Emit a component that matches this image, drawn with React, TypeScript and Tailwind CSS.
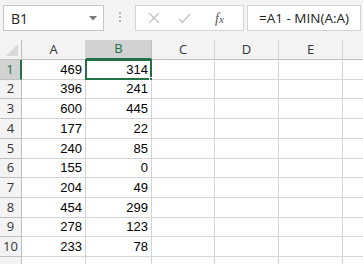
const rows: { n: number; a: number; b: number; h: string }[] = [
  { n: 1, a: 469, b: 314, h: "h-[20px]" },
  { n: 2, a: 396, b: 241, h: "h-[19px]" },
  { n: 3, a: 600, b: 445, h: "h-[20px]" },
  { n: 4, a: 177, b: 22, h: "h-[20px]" },
  { n: 5, a: 240, b: 85, h: "h-[20px]" },
  { n: 6, a: 155, b: 0, h: "h-[19px]" },
  { n: 7, a: 204, b: 49, h: "h-[20px]" },
  { n: 8, a: 454, b: 299, h: "h-[20px]" },
  { n: 9, a: 278, b: 123, h: "h-[19px]" },
  { n: 10, a: 233, b: 78, h: "h-[20px]" },
];

const cols = [
  { key: "A", w: "w-[64px]" },
  { key: "B", w: "w-[66px]" },
  { key: "C", w: "w-[63px]" },
  { key: "D", w: "w-[64px]" },
  { key: "E", w: "w-[64px]" },
  { key: "F", w: "w-[40px]" },
];

function FormulaBar() {
  return (
    <div className="flex h-[40px] items-start pl-[3px] pt-[5px]">
      <div className="flex h-[26px] w-[101px] items-center justify-between border border-[#c6c6c6] bg-white pl-[7px] pr-[6px]">
        <span className="text-[14px] text-[#222]">B1</span>
        <svg width="8" height="5" viewBox="0 0 8 5">
          <path d="M0 0H8L4 4.5Z" fill="#777" />
        </svg>
      </div>
      <div className="ml-[15px] mt-[7px] flex flex-col gap-[2px]">
        <span className="block h-[2px] w-[2px] bg-[#b4b4b4]" />
        <span className="block h-[2px] w-[2px] bg-[#b4b4b4]" />
        <span className="block h-[2px] w-[2px] bg-[#b4b4b4]" />
      </div>
      <div className="ml-[14px] flex h-[26px] w-[109px] items-center border border-[#d4d4d4] bg-white">
        <svg className="ml-[12px]" width="12" height="12" viewBox="0 0 12 12">
          <path d="M1 1L11 11M11 1L1 11" stroke="#c4c4c4" strokeWidth="1.4" />
        </svg>
        <svg className="ml-[18px]" width="13" height="11" viewBox="0 0 13 11">
          <path d="M1 6L4.5 9.5L12 1" stroke="#c4c4c4" strokeWidth="1.4" fill="none" />
        </svg>
        <span className="ml-[24px] font-['Liberation_Serif',serif] text-[14px] italic text-[#555]">
          f<span className="text-[11px]">x</span>
        </span>
      </div>
      <div className="ml-[3px] flex h-[26px] w-[114px] items-center border border-[#d4d4d4] bg-white pl-[11px]">
        <span className="text-[13.5px] text-[#222]">=A1 - MIN(A:A)</span>
      </div>
    </div>
  );
}

function HeaderRow() {
  return (
    <div className="flex h-[20px]">
      <div className="relative w-[22px] shrink-0 border-b border-r border-[#bfbfbf] bg-[#f3f3f3]">
        <svg className="absolute bottom-[3px] right-[3px]" width="12" height="12" viewBox="0 0 12 12">
          <path d="M12 0V12H0Z" fill="#d9d9d9" />
        </svg>
      </div>
      {cols.map((c) =>
        c.key === "B" ? (
          <div
            key={c.key}
            className={`${c.w} flex shrink-0 items-center justify-center border-b-2 border-r border-b-[#217346] border-r-[#bfbfbf] bg-[#d2d2d2] text-[13px] text-[#217346]`}
          >
            {c.key}
          </div>
        ) : (
          <div
            key={c.key}
            className={`${c.w} flex shrink-0 items-center justify-center border-b border-r border-[#d4d4d4] border-b-[#bfbfbf] bg-[#f3f3f3] text-[13px] text-[#333]`}
          >
            {c.key === "F" ? null : c.key}
          </div>
        )
      )}
    </div>
  );
}

export default function App() {
  return (
    <div className="h-[264px] w-[363px] overflow-hidden bg-[#f3f3f3] font-['Open_Sans',sans-serif]">
      <FormulaBar />
      <HeaderRow />
      {rows.map((r) => (
        <div key={r.n} className={`flex ${r.h}`}>
          {r.n === 1 ? (
            <div className="flex w-[22px] shrink-0 items-center justify-center border-b border-r-2 border-b-[#bfbfbf] border-r-[#217346] bg-[#d2d2d2] text-[13px] text-[#217346]">
              {r.n}
            </div>
          ) : (
            <div className="flex w-[22px] shrink-0 items-center justify-center border-b border-r border-[#bfbfbf] bg-[#f3f3f3] text-[13px] text-[#333]">
              {r.n}
            </div>
          )}
          {cols.map((c) => {
            const val = c.key === "A" ? r.a : c.key === "B" ? r.b : null;
            const sel = r.n === 1 && c.key === "B";
            return (
              <div
                key={c.key}
                className={`${c.w} relative flex shrink-0 items-center justify-end border-b border-r border-[#d4d4d4] bg-white pr-[3px] font-['Liberation_Sans',sans-serif] text-[13px] text-black`}
              >
                {val}
                {sel && (
                  <>
                    <div className="absolute -left-[1px] -top-[1px] bottom-[-1px] right-[-1px] border-2 border-[#217346]" />
                    <div className="absolute bottom-[-3px] right-[-3px] h-[5px] w-[5px] border border-white bg-[#217346]" />
                  </>
                )}
              </div>
            );
          })}
        </div>
      ))}
      <div className="flex h-[10px]">
        <div className="w-[22px] shrink-0 border-r border-[#bfbfbf] bg-[#f3f3f3]" />
        {cols.map((c) => (
          <div key={c.key} className={`${c.w} shrink-0 border-r border-[#d4d4d4] bg-white`} />
        ))}
      </div>
    </div>
  );
}
